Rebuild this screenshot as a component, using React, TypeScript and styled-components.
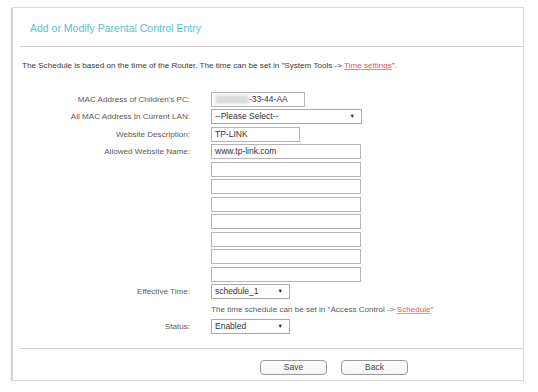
import { Fragment } from 'react';
import styled, { createGlobalStyle } from 'styled-components';

const GlobalStyle = createGlobalStyle`
    body {
        margin: 0;
        background: #fff;
        font-family: "Liberation Sans", Arial, sans-serif;
    }
`;

const blankSites = ['', '', '', '', '', '', ''];

export default function App() {
    return (
        <>
            <GlobalStyle />
            <Panel>
                <Header>
                    <Title>Add or Modify Parental Control Entry</Title>
                </Header>
                <Note>
                    The Schedule is based on the time of the Router. The time can be set in "System Tools -&gt;{' '}
                    <Link>Time settings</Link>".
                </Note>
                <Form>
                    <Label>MAC Address of Children's PC:</Label>
                    <Field $width={94}>
                        <Blur />
                        -33-44-AA
                    </Field>

                    <Label>All MAC Address In Current LAN:</Label>
                    <Select $width={151}>
                        --Please Select--
                        <Arrow>▼</Arrow>
                    </Select>

                    <Label>Website Description:</Label>
                    <Field $width={89}>TP-LINK</Field>

                    <Label>Allowed Website Name:</Label>
                    <Field $width={150}>www.tp-link.com</Field>
                    {blankSites.map((_, i) => (
                        <Fragment key={i}>
                            <Label />
                            <Field $width={150} />
                        </Fragment>
                    ))}

                    <Label>Effective Time:</Label>
                    <Select $width={79}>
                        schedule_1
                        <Arrow>▼</Arrow>
                    </Select>

                    <Label />
                    <Hint>
                        The time schedule can be set in "Access Control -&gt; <RedLink>Schedule</RedLink>"
                    </Hint>

                    <Label>Status:</Label>
                    <Select $width={79}>
                        Enabled
                        <Arrow>▼</Arrow>
                    </Select>
                </Form>
                <Footer>
                    <Button>Save</Button>
                    <Button>Back</Button>
                </Footer>
            </Panel>
        </>
    );
}

const Panel = styled.div`
    margin: 7px 0 0 12px;
    width: 512px;
    height: 374px;
    border: 1px solid #d8d8d8;
    box-shadow: -1px 1px 1px #d0d0d0;
    background: #fff;
    box-sizing: border-box;
`;

const Header = styled.div`
    margin-left: 7px;
    height: 38px;
    border-bottom: 1px solid #d0d0d0;
    display: flex;
    align-items: center;
    padding-left: 10px;
`;

const Title = styled.div`
    font-size: 10.5px;
    color: #55c3d2;
    margin-top: 2px;
`;

const Note = styled.div`
    margin: 13px 0 0 9px;
    font-size: 8.1px;
    line-height: 12px;
    color: #3a3a3a;
`;

const Link = styled.span`
    color: #ef4f5a;
    text-decoration: underline;
    text-decoration-color: #4cc3d0;
`;

const RedLink = styled.span`
    color: #ef4f5a;
    text-decoration: underline;
    text-decoration-color: #ef8a90;
`;

const Form = styled.div`
    margin-top: 19.5px;
    display: grid;
    grid-template-columns: 177px auto;
    column-gap: 21px;
    row-gap: 2.5px;
    justify-items: start;
    align-items: center;
`;

const Label = styled.div`
    justify-self: end;
    font-size: 8.1px;
    color: #5a5a5a;
    line-height: 15px;
`;

const Field = styled.div<{ $width: number }>`
    width: ${(p) => p.$width}px;
    height: 15px;
    box-sizing: border-box;
    border: 1px solid #b4b4b4;
    padding: 0 3px;
    font-size: 8.5px;
    line-height: 13px;
    color: #333;
    display: flex;
    align-items: center;
    background: #fff;
`;

const Blur = styled.span`
    width: 34px;
    height: 9px;
    background: #dcdcdc;
    filter: blur(1.5px);
`;

const Select = styled(Field)`
    justify-content: space-between;
    border-color: #aaa;
`;

const Arrow = styled.span`
    font-size: 5.5px;
    color: #222;
    margin-right: 3px;
`;

const Hint = styled.div`
    font-size: 8.1px;
    line-height: 15px;
    color: #5a5a5a;
`;

const Footer = styled.div`
    margin: 14px 0 0 7px;
    border-top: 1px solid #d0d0d0;
    padding: 11px 0 0 240px;
    display: flex;
    gap: 14px;
`;

const Button = styled.button`
    width: 67px;
    height: 15px;
    padding: 0;
    border: 1px solid #999;
    border-radius: 4px;
    background: linear-gradient(#fff, #f4f4f4);
    font-family: "Liberation Sans", Arial, sans-serif;
    font-size: 8.5px;
    color: #444;
    line-height: 13px;
`;
